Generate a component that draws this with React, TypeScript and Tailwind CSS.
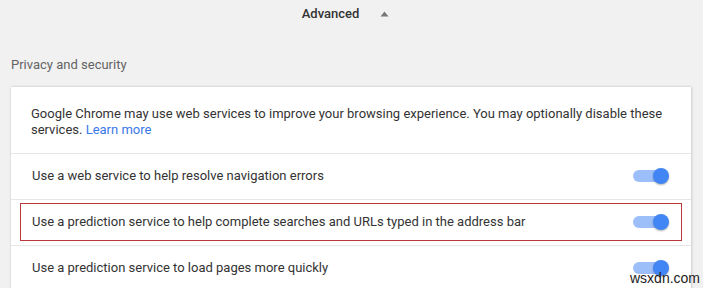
import React from "react";

function Toggle() {
  return (
    <div className="relative h-4 w-[36px] shrink-0">
      <div className="absolute left-0 top-[2px] h-[12px] w-[30px] rounded-full bg-[#9dbff9]" />
      <div className="absolute right-0 top-0 h-4 w-4 rounded-full bg-[#4285f4] shadow-[0_1px_2px_rgba(0,0,0,0.3)]" />
    </div>
  );
}

export default function App() {
  const rows = [
    "Use a web service to help resolve navigation errors",
    "Use a prediction service to help complete searches and URLs typed in the address bar",
    "Use a prediction service to load pages more quickly",
  ];

  return (
    <div className="relative h-[288px] w-[703px] overflow-hidden bg-[#f1f1f1] font-['Roboto',sans-serif] text-[13px] text-[#333]">
      {/* Advanced toggle */}
      <div className="flex h-[28px] items-center justify-center pr-[12px]">
        <span className="font-medium text-[#333]">Advanced</span>
        <svg className="ml-[21px]" width="9" height="6" viewBox="0 0 9 6">
          <path d="M4.5 0.5 L8.5 5.5 L0.5 5.5 Z" fill="#777" />
        </svg>
      </div>

      <div className="pl-[11px] pt-[27px] text-[#646464]">Privacy and security</div>

      {/* Card */}
      <div className="ml-[11px] mt-[12px] w-[680px] bg-white shadow-[0_0_2px_rgba(0,0,0,0.15),1px_0_3px_rgba(0,0,0,0.1)]">
        <div className="border-b border-[#e6e6e6] px-[20px] pb-[15px] pt-[19px] leading-[16px]">
          Google Chrome may use web services to improve your browsing experience. You may optionally disable
          these services. <span className="text-[#3b78e7]">Learn more</span>
        </div>
        {rows.map((r, i) => (
          <div key={i} className="border-b border-[#e6e6e6] px-[9px] pb-[4px] pt-[3px]">
            <div
              className={
                "flex h-[38px] items-center justify-between pl-[11px] pr-[12px] " +
                (i === 1 ? "border border-[#b8383b]" : "border border-transparent")
              }
            >
              <span>{r}</span>
              <Toggle />
            </div>
          </div>
        ))}
      </div>

      <div className="absolute left-[630px] top-[271px] text-[14px] leading-none text-[#222] font-['Liberation_Sans',sans-serif]">
        wsxdn.com
      </div>
    </div>
  );
}
